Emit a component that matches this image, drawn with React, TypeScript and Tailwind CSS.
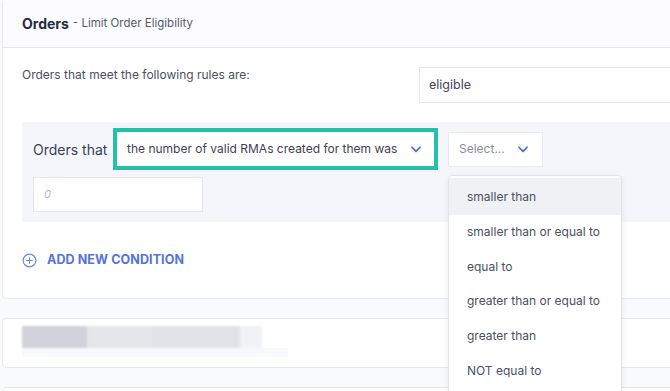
import React from "react";

const Chevron = ({ className = "" }: { className?: string }) => (
  <svg width="14" height="14" viewBox="0 0 24 24" fill="none" className={className}>
    <path d="M5 9l7 7 7-7" stroke="#4a6cd4" strokeWidth="3" strokeLinecap="round" strokeLinejoin="round" />
  </svg>
);

export default function App() {
  const items = [
    "smaller than",
    "smaller than or equal to",
    "equal to",
    "greater than or equal to",
    "greater than",
    "NOT equal to",
  ];
  return (
    <div
      className="relative w-[670px] h-[391px] overflow-hidden bg-[#f9fafc] text-[#3f4254]"
      style={{ fontFamily: "Inter, 'Open Sans', sans-serif" }}
    >
      {/* Card 1 */}
      <div className="ml-[2px] mt-[-1px] w-[720px] bg-white border border-[#e6e8f0] rounded-[4px]">
        <div className="h-[48px] bg-[#fcfcfe] border-b border-[#e4e6ee] pl-[19px] flex items-center">
          <span className="text-[14px] font-bold text-[#262c46]">Orders</span>
          <span className="text-[11.5px] text-[#555a6b] ml-[4px]">- Limit Order Eligibility</span>
        </div>
        <div className="pl-[19px] pb-[28px]">
          <div className="mt-[19px] h-[36px] flex items-center">
            <span className="text-[12px] text-[#4b5063] w-[397px] -mt-[21px]">Orders that meet the following rules are:</span>
            <div className="flex-1 h-[36px] border border-[#e4e6ee] bg-white flex items-center pl-[9px] text-[12.5px] text-[#4b4060]">
              eligible
            </div>
          </div>
          <div className="mt-[19px] h-[100px] bg-[#f4f6fc] pl-[11px] pt-[6px]">
            <div className="flex items-center h-[42px]">
              <span className="text-[14px] text-[#3b3f52] w-[80px]">Orders that</span>
              <div className="w-[325px] h-[42px] border-[4px] border-[#22c1a8] bg-white flex items-center pl-[10px] pr-[11px] justify-between">
                <span className="text-[12px] text-[#3f4254]">the number of valid RMAs created for them was</span>
                <Chevron />
              </div>
              <div className="ml-[10px] w-[95px] h-[35px] border border-[#e8eaf1] bg-white flex items-center justify-between pl-[10px] pr-[12px]">
                <span className="text-[12px] text-[#8a8d99]">Select...</span>
                <Chevron />
              </div>
            </div>
            <div className="mt-[7px] w-[170px] h-[35px] border border-[#e4e6ee] bg-white flex items-center pl-[10px]">
              <span className="text-[11px] italic text-[#b6b8c2]">0</span>
            </div>
          </div>
          <div className="mt-[28px] flex items-center h-[20px]">
            <svg width="15" height="15" viewBox="0 0 16 16" fill="none">
              <circle cx="8" cy="8" r="6.8" stroke="#6a84dd" strokeWidth="1.2" />
              <path d="M8 5v6M5 8h6" stroke="#6a84dd" strokeWidth="1.2" strokeLinecap="round" />
            </svg>
            <span className="ml-[10px] text-[12.5px] font-bold text-[#5673db] tracking-[0.1px]">ADD NEW CONDITION</span>
          </div>
        </div>
      </div>

      {/* Card 2 */}
      <div className="ml-[2px] mt-[19px] w-[720px] h-[50px] bg-white border border-[#e6e8f0] rounded-[4px] pl-[19px] pt-[7px]">
        <div className="flex h-[22px] blur-[1px]">
          <div className="w-[65px] bg-[#d0d1d9]" />
          <div className="w-[65px] bg-[#e5e6ea]" />
          <div className="w-[88px] bg-[#e2e3e8]" />
          <div className="w-[22px] bg-[#f1f2f5]" />
        </div>
        <div className="h-[9px] w-[266px] bg-[#f8f9fc]" />
      </div>

      {/* Card 3 */}
      <div className="ml-[2px] mt-[19px] w-[720px] h-[50px] bg-white border border-[#e6e8f0] rounded-[4px]" />

      {/* Dropdown menu */}
      <div className="absolute left-[448px] top-[175px] w-[174px] h-[230px] bg-white border border-[#e2e4ea] rounded-[4px] shadow-[0_2px_6px_rgba(0,0,0,0.08)] pt-[2px]">
        {items.map((t, i) => (
          <div
            key={t}
            className={
              "h-[34.6px] flex items-center pl-[18px] text-[12px] text-[#4b5063] " +
              (i === 0 ? "bg-[#f0f1f4] h-[37px]" : "")
            }
          >
            {t}
          </div>
        ))}
      </div>
    </div>
  );
}
